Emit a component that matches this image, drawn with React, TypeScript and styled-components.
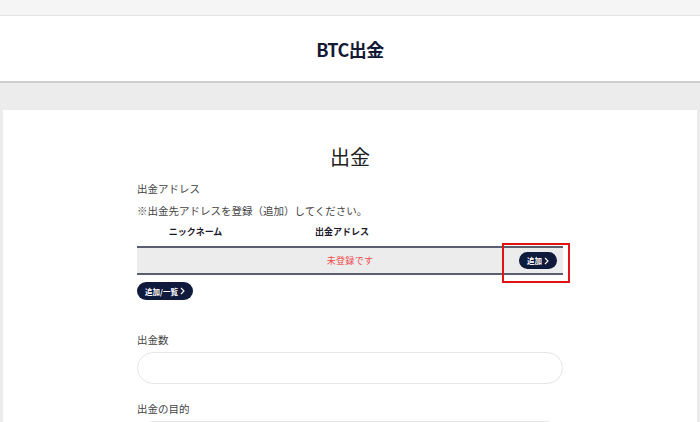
import React from 'react';
import styled, { createGlobalStyle } from 'styled-components';

const GlobalStyle = createGlobalStyle`
  html, body {
    margin: 0;
    padding: 0;
    background: #ececec;
    font-family: "Noto Sans CJK JP", "Noto Sans", sans-serif;
    color: #333;
  }
`;

const TopStrip = styled.div`
  height: 15px;
  background: #f5f5f5;
  border-bottom: 1px solid #e4e4e4;
`;

const Header = styled.header`
  height: 65px;
  background: #fff;
  border-bottom: 2px solid #cfcfcf;
  display: flex;
  align-items: center;
  justify-content: center;
`;

const Title = styled.h1`
  margin: 0;
  font-size: 18px;
  font-weight: 700;
  color: #141a33;
  letter-spacing: -0.5px;
`;

const Page = styled.main`
  padding: 27px 3px 0;
`;

const Card = styled.section`
  background: #fff;
  padding: 32px 0 0;
  min-height: 300px;
`;

const Inner = styled.div`
  width: 426px;
  margin: 0 auto;
`;

const Heading = styled.h2`
  margin: 0 0 6px;
  font-size: 20px;
  line-height: 30px;
  font-weight: 400;
  text-align: center;
  color: #222;
`;

const Label = styled.div<{ $gap?: number }>`
  font-size: 10.5px;
  line-height: 22px;
  color: #444;
  margin-top: ${(p) => p.$gap ?? 0}px;
`;

const Table = styled.div`
  position: relative;
`;

const HeadRow = styled.div`
  display: grid;
  grid-template-columns: 117px 176px 1fr;
  height: 24px;
  align-items: start;
  font-size: 9px;
  font-weight: 700;
  line-height: 20px;
  color: #1a1a2a;
  text-align: center;
`;

const BodyRow = styled.div`
  display: grid;
  grid-template-columns: 1fr auto 1fr;
  align-items: center;
  height: 25px;
  background: #ececec;
  border-top: 2px solid #5b5e70;
  border-bottom: 2px solid #5b5e70;
`;

const Empty = styled.span`
  grid-column: 2;
  font-size: 9px;
  color: #ee4b4b;
  letter-spacing: 0.3px;
`;

const PillButton = styled.button<{ $width: number }>`
  display: inline-flex;
  align-items: center;
  justify-content: center;
  gap: 2px;
  width: ${(p) => p.$width}px;
  height: 18px;
  padding: 0;
  border: none;
  border-radius: 9px;
  background: #0f1a3d;
  color: #fff;
  font-family: inherit;
  font-size: 7.5px;
  font-weight: 700;
  cursor: pointer;
`;

const RowButton = styled(PillButton)`
  grid-column: 3;
  justify-self: end;
  margin-right: 6px;
  height: 17px;
`;

const Highlight = styled.div`
  position: absolute;
  left: 365px;
  top: 21px;
  width: 64px;
  height: 36px;
  border: 2px solid #e01414;
  pointer-events: none;
`;

const ListButton = styled(PillButton)`
  margin-top: 7px;
`;

const Input = styled.input`
  display: block;
  box-sizing: border-box;
  width: 100%;
  height: 32px;
  margin-top: 1px;
  border: 1px solid #e6e6e6;
  border-radius: 16px;
  background: #fff;
  outline: none;
`;

const Chevron = () => (
  <svg width="5" height="8" viewBox="0 0 5 8" fill="none">
    <path d="M1 1l3 3-3 3" stroke="#fff" strokeWidth="1.1" />
  </svg>
);

export default function App() {
  return (
    <>
      <GlobalStyle />
      <TopStrip />
      <Header>
        <Title>BTC出金</Title>
      </Header>
      <Page>
        <Card>
          <Inner>
            <Heading>出金</Heading>
            <Label>出金アドレス</Label>
            <Label>※出金先アドレスを登録（追加）してください。</Label>
            <Table>
              <HeadRow>
                <span>ニックネーム</span>
                <span>出金アドレス</span>
                <span />
              </HeadRow>
              <BodyRow>
                <Empty>未登録です</Empty>
                <RowButton $width={38}>
                  追加 <Chevron />
                </RowButton>
              </BodyRow>
              <Highlight />
            </Table>
            <ListButton $width={56}>
              追加/一覧 <Chevron />
            </ListButton>
            <Label $gap={29}>出金数</Label>
            <Input />
            <Label $gap={14}>出金の目的</Label>
            <Input />
          </Inner>
        </Card>
      </Page>
    </>
  );
}
